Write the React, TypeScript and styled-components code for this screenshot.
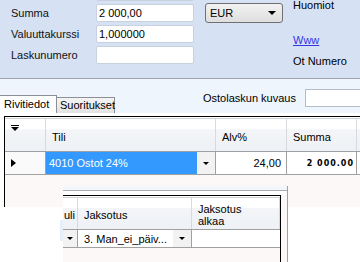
import React from "react";
import styled, { createGlobalStyle } from "styled-components";

const GlobalStyle = createGlobalStyle`
  html, body {
    margin: 0;
    padding: 0;
    background: #fff;
  }
`;

const Page = styled.div`
  position: relative;
  width: 360px;
  height: 262px;
  overflow: hidden;
  background: #fff;
  font-family: "Liberation Sans", Arial, sans-serif;
  font-size: 11px;
  color: #000;
`;

/* ---------- header form ---------- */

const HeaderPanel = styled.div`
  display: flex;
  align-items: flex-start;
  height: 78px;
  padding-left: 11px;
  background: #d6e2f4;
  border-bottom: 1px solid #a0a7b2;
  overflow: hidden;
`;

const FieldGrid = styled.div`
  display: grid;
  grid-template-columns: 85px 98px;
  grid-auto-rows: 18px;
  row-gap: 3px;
  margin-top: -17px;
`;

const FieldLabel = styled.div`
  display: flex;
  align-items: center;
  color: #111;
`;

const TextBox = styled.div`
  box-sizing: border-box;
  display: flex;
  align-items: center;
  height: 18px;
  padding: 0 2px;
  background: #fff;
  border: 1px solid #c8d2df;
  border-radius: 2px;
`;

const Select = styled.div`
  box-sizing: border-box;
  display: flex;
  align-items: center;
  justify-content: space-between;
  width: 78px;
  height: 20px;
  margin: 3px 0 0 11px;
  padding: 0 4px;
  background: linear-gradient(#f2f2f2, #dedede);
  border: 1px solid #707070;
  border-radius: 3px;
`;

const ComboArrow = styled.span`
  width: 0;
  height: 0;
  margin-right: 2px;
  border-left: 4px solid transparent;
  border-right: 4px solid transparent;
  border-top: 4px solid #000;
`;

const SideColumn = styled.div`
  display: flex;
  flex-direction: column;
  margin-left: 10px;
  margin-top: -1px;
  line-height: 13px;
`;

const SideItem = styled.div<{ $gap?: number }>`
  margin-top: ${(p) => p.$gap ?? 0}px;
  white-space: nowrap;
`;

const LinkText = styled.a`
  color: #3434e6;
  text-decoration: underline;
`;

/* ---------- tabs ---------- */

const TabStrip = styled.div`
  display: flex;
  align-items: flex-end;
  height: 34px;
  background: #eef5fd;
`;

const Tab = styled.div<{ $active?: boolean }>`
  box-sizing: border-box;
  height: ${(p) => (p.$active ? 18 : 16)}px;
  width: ${(p) => (p.$active ? 57 : 58)}px;
  padding: ${(p) => (p.$active ? "2px 0 0 4px" : "1px 0 0 3px")};
  background: ${(p) => (p.$active ? "#fff" : "linear-gradient(#f4f4f4, #e2e2e2)")};
  border: 1px solid #8c8f98;
  border-bottom: none;
  border-left: none;
  white-space: nowrap;
`;

const DescGroup = styled.div`
  display: flex;
  align-items: center;
  margin: 0 -5px 6px auto;
`;

const DescLabel = styled.div`
  width: 102px;
  white-space: nowrap;
`;

const DescInput = styled.div`
  box-sizing: border-box;
  width: 60px;
  height: 18px;
  background: #fff;
  border: 1px solid #b5bcc7;
`;

/* ---------- grids ---------- */

const TabPage = styled.div`
  padding: 3px 0 0 4px;
  background: #fff;
`;

const GridFrame = styled.div`
  height: 90px;
  background: #fcf8f7;
  border-top: 1px solid #000;
  border-left: 1px solid #000;
  overflow: hidden;
`;

const Row = styled.div<{ $cols: string }>`
  display: grid;
  grid-template-columns: ${(p) => p.$cols};
`;

const HeaderRow = styled(Row)<{ $h: number }>`
  height: ${(p) => p.$h}px;
  border-top: 1px solid #fff;
  border-bottom: 1px solid #a0a0a0;
`;

const HeaderCell = styled.div<{ $center?: boolean; $inset?: number }>`
  box-sizing: border-box;
  display: flex;
  align-items: ${(p) => (p.$center ? "center" : "flex-end")};
  padding: ${(p) => (p.$center ? `3px 0 0 ${p.$inset ?? 6}px` : `0 0 8px ${p.$inset ?? 6}px`)};
  background: linear-gradient(#fff 0, #fff 32%, #f3f5f8 33%, #eef1f5 100%);
  border-top: 1px solid #cfd3d8;
  border-right: 1px solid #d6d9dd;
  line-height: 12px;
  white-space: nowrap;
  overflow: hidden;
`;

const CornerCell = styled(HeaderCell)`
  align-items: flex-start;
  padding: 6px 0 0 6px;
`;

const DataRow = styled(Row)<{ $h: number }>`
  height: ${(p) => p.$h}px;
  border-bottom: 1px solid #a0a0a0;
`;

const Cell = styled.div<{ $right?: boolean; $pad?: number; $last?: boolean }>`
  box-sizing: border-box;
  display: flex;
  align-items: center;
  justify-content: ${(p) => (p.$right ? "flex-end" : "flex-start")};
  padding: ${(p) => (p.$right ? `0 ${p.$pad ?? 5}px 0 0` : `0 0 0 ${p.$pad ?? 3}px`)};
  background: #fff;
  border-right: ${(p) => (p.$last ? "none" : "1px solid #a0a0a0")};
  white-space: nowrap;
  overflow: hidden;
`;

const RowHeaderCell = styled(Cell)`
  padding-left: 6px;
  background: #fafafa;
`;

const ComboCell = styled(Cell)<{ $selected?: boolean }>`
  padding: 0;
  background: ${(p) => (p.$selected ? "#3399ff" : "#fff")};
  color: ${(p) => (p.$selected ? "#fff" : "#000")};
`;

const ComboText = styled.span<{ $inset?: number }>`
  flex: 1;
  padding-left: ${(p) => p.$inset ?? 3}px;
  overflow: hidden;
`;

const DropButton = styled.span<{ $w?: number }>`
  display: flex;
  align-items: center;
  justify-content: center;
  align-self: stretch;
  width: ${(p) => p.$w ?? 18}px;
  background: #f2f2f2;
`;

const SmallArrow = styled.span`
  width: 0;
  height: 0;
  border-left: 3px solid transparent;
  border-right: 3px solid transparent;
  border-top: 3px solid #000;
`;

const RowPointer = styled.span`
  width: 0;
  height: 0;
  border-top: 4px solid transparent;
  border-bottom: 4px solid transparent;
  border-left: 5px solid #000;
`;

const AmountText = styled.span`
  font-family: "DejaVu Sans", sans-serif;
  font-size: 8px;
  font-weight: bold;
  letter-spacing: 1px;
`;

/* ---------- overlapping grid window ---------- */

const FloatingWindow = styled.div`
  position: absolute;
  left: 63px;
  top: 186px;
  width: 225px;
  height: 76px;
  box-sizing: border-box;
  background: #fcf8f7;
  border-right: 1px solid #a0a0a0;

  &::before {
    content: "";
    position: absolute;
    left: -3px;
    top: 34px;
    width: 3px;
    height: 21px;
    background: #e6eefa;
  }
`;

const WindowTop = styled.div`
  height: 4px;
  background: #f3f7fc;
  border-bottom: 1px solid #a9adb3;
`;

const WindowGap = styled.div`
  height: 4px;
  background: #fff;
`;

const InnerGrid = styled.div`
  width: 218px;
  box-sizing: border-box;
  height: 67px;
  border-top: 1px solid #000;
  border-right: 1px solid #000;
`;

const FilterIcon = () => (
  <svg width="8" height="6" viewBox="0 0 8 6">
    <rect x="0" y="0" width="8" height="1" fill="#000" />
    <path d="M0 2 H8 L4 6 Z" fill="#000" />
  </svg>
);

const mainCols = "41px 170px 71px 70px 1fr";
const floatCols = "15px 114px 1fr";

export default function App() {
  return (
    <Page>
      <GlobalStyle />
      <HeaderPanel>
        <FieldGrid>
          <FieldLabel />
          <TextBox />
          <FieldLabel>Summa</FieldLabel>
          <TextBox>2 000,00</TextBox>
          <FieldLabel>Valuuttakurssi</FieldLabel>
          <TextBox>1,000000</TextBox>
          <FieldLabel>Laskunumero</FieldLabel>
          <TextBox />
        </FieldGrid>
        <Select>
          <span>EUR</span>
          <ComboArrow />
        </Select>
        <SideColumn>
          <SideItem>Huomiot</SideItem>
          <SideItem $gap={22}>
            <LinkText>Www</LinkText>
          </SideItem>
          <SideItem $gap={8}>Ot Numero</SideItem>
        </SideColumn>
      </HeaderPanel>

      <TabStrip>
        <Tab $active>Rivitiedot</Tab>
        <Tab>Suoritukset</Tab>
        <DescGroup>
          <DescLabel>Ostolaskun kuvaus</DescLabel>
          <DescInput />
        </DescGroup>
      </TabStrip>

      <TabPage>
        <GridFrame>
          <HeaderRow $cols={mainCols} $h={33}>
            <CornerCell>
              <FilterIcon />
            </CornerCell>
            <HeaderCell>Tili</HeaderCell>
            <HeaderCell>Alv%</HeaderCell>
            <HeaderCell>Summa</HeaderCell>
            <HeaderCell />
          </HeaderRow>
          <DataRow $cols={mainCols} $h={22}>
            <RowHeaderCell>
              <RowPointer />
            </RowHeaderCell>
            <ComboCell $selected>
              <ComboText>4010 Ostot 24%</ComboText>
              <DropButton>
                <SmallArrow />
              </DropButton>
            </ComboCell>
            <Cell $right>24,00</Cell>
            <Cell $right $pad={2}>
              <AmountText>2 000.00</AmountText>
            </Cell>
            <Cell />
          </DataRow>
        </GridFrame>
      </TabPage>

      <FloatingWindow>
        <WindowTop />
        <WindowGap />
        <InnerGrid>
          <HeaderRow $cols={floatCols} $h={32}>
            <HeaderCell $center $inset={1}>
              uli
            </HeaderCell>
            <HeaderCell $center>Jaksotus</HeaderCell>
            <HeaderCell $center>
              <span>
                Jaksotus
                <br />
                alkaa
              </span>
            </HeaderCell>
          </HeaderRow>
          <DataRow $cols={floatCols} $h={17}>
            <ComboCell>
              <DropButton $w={14}>
                <SmallArrow />
              </DropButton>
            </ComboCell>
            <ComboCell>
              <ComboText $inset={6}>3. Man_ei_päiv...</ComboText>
              <DropButton>
                <SmallArrow />
              </DropButton>
            </ComboCell>
            <Cell $last />
          </DataRow>
        </InnerGrid>
      </FloatingWindow>
    </Page>
  );
}
